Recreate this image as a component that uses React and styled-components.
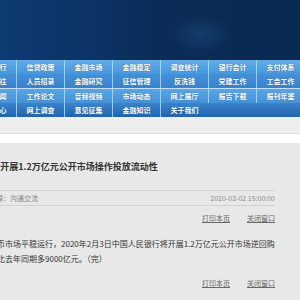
import React from "react";
import styled, { createGlobalStyle } from "styled-components";

const Global = createGlobalStyle`
  html, body { margin: 0; padding: 0; background: #e8e8e8; }
  body { font-family: "Noto Sans CJK SC", "Noto Sans", sans-serif; }
  #root { width: 300px; height: 300px; overflow: hidden; }
`;

const Viewport = styled.div`
  width: 300px;
  height: 300px;
  overflow: hidden;
  background: #e8e8e8;
`;

const Page = styled.div`
  width: 475px;
  margin-left: -171px;
`;

const Header = styled.header`
  height: 60px;
  background:
    radial-gradient(ellipse 40px 26px at 372px 34px, rgba(40, 95, 150, 0.35), transparent 75%),
    linear-gradient(90deg, #0f3e77 0%, #0e3b73 36%, #0c3466 55%, #0a2c56 70%, #092a51 100%);
`;

const Nav = styled.nav`
  background: #2f78c4;
`;

const NavGroup = styled.div`
  & + & {
    border-top: 1px solid #c4e0f7;
  }
`;

const tones = {
  a: "linear-gradient(#62adea, #4797dc)",
  b: "linear-gradient(#4590d8, #3782cd)",
  c: "linear-gradient(#5aa5e4, #4591d7)",
  d: "linear-gradient(#3a84cd, #2264ad)",
};

const NavRow = styled.div`
  display: grid;
  grid-template-columns: repeat(9, 48px);
  justify-content: end;
  height: 14px;
  background: ${(p) => tones[p.$tone]};
`;

const NavItem = styled.a`
  display: flex;
  align-items: center;
  justify-content: center;
  color: #ffffff;
  font-size: 7px;
  font-weight: 700;
  line-height: 14px;
  white-space: nowrap;
  text-decoration: none;
  text-shadow: 0 0 1px rgba(10, 50, 100, 0.6);
  border-left: ${(p) => (p.$sep ? "1px solid rgba(175, 215, 247, 0.85)" : "none")};
`;

const Band = styled.div`
  height: 16px;
  background: #eeeeee;
  border-bottom: 1px solid #dddddd;
`;

const WhiteStrip = styled.div`
  height: 9px;
  background: #ffffff;
`;

const Article = styled.article`
  background: #e8e8e8;
  padding: 18px 29px 20px 0;
  color: #333333;
`;

const Title = styled.h1`
  margin: 0 0 17px;
  text-align: center;
  font-size: 9px;
  line-height: 12px;
  font-weight: 700;
  color: #333333;
`;

const Meta = styled.div`
  display: flex;
  align-items: center;
  height: 14px;
  padding-left: 146px;
  border-top: 1px solid #d2d2d2;
  border-bottom: 1px solid #d2d2d2;
  font-size: 7px;
  color: #8a8a8a;
`;

const Source = styled.span`
  flex: 1;
`;

const Links = styled.div`
  display: flex;
  justify-content: flex-end;
  gap: 17px;
  height: 12px;
  line-height: 12px;
  margin-top: 6px;
  font-size: 7px;
`;

const LinkText = styled.a`
  color: #666666;
  text-decoration: underline;
`;

const Body = styled.p`
  margin: 12px 0 11px;
  font-size: 8px;
  line-height: 15px;
  text-indent: 16px;
  color: #333333;
`;

const navRows = [
  { tone: "a", items: ["新闻发布", "法律法规", "货币发行", "信贷政策", "金融市场", "金融稳定", "调查统计", "银行会计", "支付体系"] },
  { tone: "b", items: ["金融科技", "经理国库", "国际交往", "人员招录", "金融研究", "征信管理", "反洗钱", "党建工作", "工会工作"] },
  { tone: "c", items: ["统计数据", "图片新闻", "要闻新闻", "工作论文", "音频视频", "市场动态", "网上展厅", "报告下载", "报刊年鉴"] },
  { tone: "d", items: ["政务公开", "办事大厅", "服务中心", "网上调查", "意见征集", "金融知识", "关于我们", "", ""] },
];

function NavBlock({ rows }) {
  return (
    <NavGroup>
      {rows.map((row, r) => (
        <NavRow key={r} $tone={row.tone}>
          {row.items.map((t, i) => (
            <NavItem key={i} href="#" $sep={i > 0 && t !== ""}>
              {t}
            </NavItem>
          ))}
        </NavRow>
      ))}
    </NavGroup>
  );
}

function Actions() {
  return (
    <Links>
      <LinkText href="#">打印本页</LinkText>
      <LinkText href="#">关闭窗口</LinkText>
    </Links>
  );
}

export default function App() {
  return (
    <Viewport>
      <Global />
      <Page>
        <Header />
        <Nav>
          <NavBlock rows={navRows.slice(0, 2)} />
          <NavBlock rows={navRows.slice(2)} />
        </Nav>
        <Band />
        <WhiteStrip />
        <Article>
          <Title>中国人民银行开展1.2万亿元公开市场操作投放流动性</Title>
          <Meta>
            <Source>文章来源：沟通交流</Source>
            <span>2020-02-02 15:00:00</span>
          </Meta>
          <Actions />
          <Body>
            为维护春节后银行体系流动性合理充裕和货币市场平稳运行，2020年2月3日中国人民银行将开展1.2万亿元公开市场逆回购操作投放流动性，节后银行体系整体流动性水平比去年同期多9000亿元。（完）
          </Body>
          <Actions />
        </Article>
      </Page>
    </Viewport>
  );
}
